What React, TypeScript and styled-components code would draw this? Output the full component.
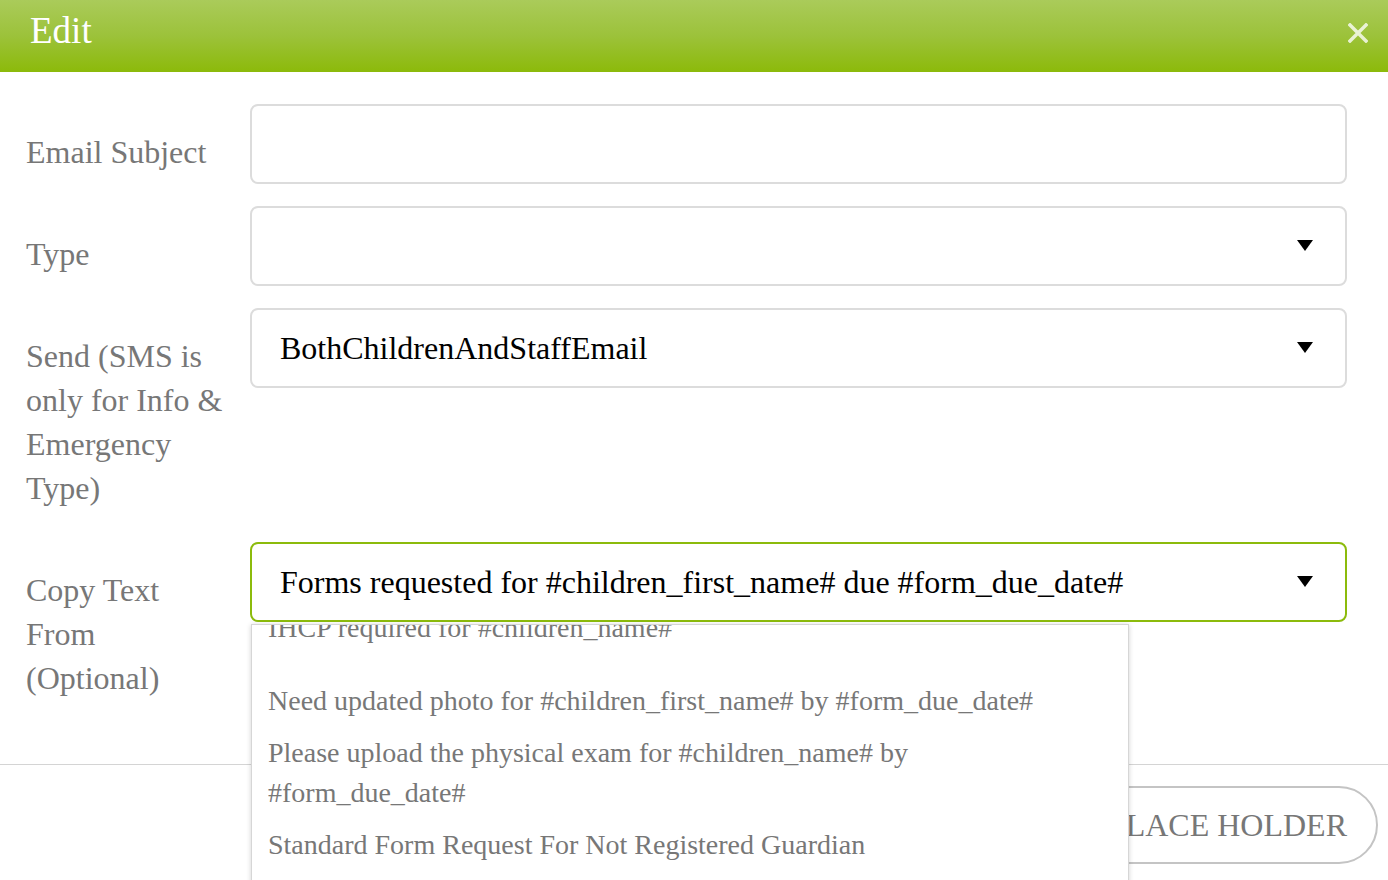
import React, { useLayoutEffect, useRef } from "react";
import styled, { createGlobalStyle } from "styled-components";

const GlobalStyle = createGlobalStyle`
  html, body { margin: 0; padding: 0; overflow: hidden; background: #fff; }
  body { font-family: "Liberation Serif", "Times New Roman", serif; }
  * { box-sizing: border-box; }
`;

const Modal = styled.div`
  width: 1388px;
  height: 880px;
  background: #fff;
  display: flex;
  flex-direction: column;
`;

const Header = styled.header`
  height: 72px;
  flex: none;
  display: flex;
  align-items: flex-start;
  justify-content: space-between;
  padding: 12px 20px 0 30px;
  background: linear-gradient(to bottom, #aacb5a 0%, #9cc23a 50%, #8cba0a 100%);
`;

const Title = styled.h1`
  margin: 0;
  font-size: 37px;
  line-height: 37px;
  font-weight: normal;
  color: #fff;
`;

const CloseButton = styled.button`
  margin-top: 11px;
  width: 20px;
  height: 20px;
  padding: 0;
  border: none;
  background: none;
  display: flex;
  cursor: pointer;
`;

const Body = styled.div`
  padding: 32px 41px 54px 26px;
  display: flex;
  flex-direction: column;
  gap: 22px;
  border-bottom: 1px solid #d4d4d4;
`;

const Row = styled.div`
  display: grid;
  grid-template-columns: 224px 1fr;
  align-items: start;
`;

const Label = styled.label`
  padding: 26px 20px 10px 0;
  font-size: 32px;
  line-height: 44px;
  color: #777;
`;

const FieldWrap = styled.div`
  position: relative;
`;

const TextInput = styled.input`
  width: 100%;
  height: 80px;
  border: 2px solid #dcdcdc;
  border-radius: 8px;
  padding: 0 28px;
  font-family: "Liberation Serif", "Times New Roman", serif;
  font-size: 32px;
  color: #000;
  outline: none;
  background: #fff;
`;

const SelectBox = styled.div<{ $focused?: boolean }>`
  height: 80px;
  border: 2px solid ${(p) => (p.$focused ? "#8cbb0c" : "#dcdcdc")};
  border-radius: 8px;
  padding: 0 32px 0 28px;
  display: flex;
  align-items: center;
  justify-content: space-between;
  font-size: 32px;
  color: #000;
  background: #fff;
`;

const SelectValue = styled.span`
  white-space: nowrap;
`;

const Arrow = styled.svg`
  flex: none;
  margin-top: -1px;
`;

const Dropdown = styled.div`
  position: absolute;
  top: calc(100% + 2px);
  left: 1px;
  width: 878px;
  height: 300px;
  background: #fff;
  border: 1px solid #d6d6d6;
  box-shadow: 0 1px 5px rgba(0, 0, 0, 0.18);
  overflow-y: auto;
  scrollbar-width: none;
  z-index: 10;
  &::-webkit-scrollbar { display: none; }
`;

const OptionList = styled.ul`
  list-style: none;
  margin: 0;
  padding: 0;
`;

const Option = styled.li<{ $extra?: number }>`
  padding: 6px 40px 6px 16px;
  margin-bottom: ${(p) => p.$extra ?? 0}px;
  font-size: 28px;
  line-height: 40px;
  color: #777;
`;

const Footer = styled.div`
  display: flex;
  justify-content: flex-end;
  padding: 21px 10px 0 0;
`;

const PillButton = styled.button`
  height: 78px;
  padding: 0 29px 0 29px;
  border: 2px solid #c4c4c4;
  border-radius: 39px;
  background: #fff;
  font-family: "Liberation Serif", "Times New Roman", serif;
  font-size: 32px;
  color: #777;
  cursor: pointer;
`;

const DownArrow = () => (
  <Arrow width="16" height="11" viewBox="0 0 16 11">
    <path d="M0 0 H16 L8 11 Z" fill="#000" />
  </Arrow>
);

const options: { text: string; extra?: number }[] = [
  { text: "Forms requested for #children_first_name# due #form_due_date#" },
  { text: "Immunization record needed for #children_name#" },
  { text: "IHCP required for #children_name#", extra: 21 },
  { text: "Need updated photo for #children_first_name# by #form_due_date#" },
  { text: "Please upload the physical exam for #children_name# by #form_due_date#" },
  { text: "Standard Form Request For Not Registered Guardian" },
  { text: "Vaccination form due #form_due_date#" },
];

export default function App() {
  const listRef = useRef<HTMLDivElement>(null);
  useLayoutEffect(() => {
    if (listRef.current) listRef.current.scrollTop = 127;
  }, []);

  return (
    <>
      <GlobalStyle />
      <Modal>
        <Header>
          <Title>Edit</Title>
          <CloseButton aria-label="Close">
            <svg width="20" height="20" viewBox="0 0 20 20">
              <path
                d="M2 2 L18 18 M18 2 L2 18"
                stroke="rgba(255,255,255,0.78)"
                strokeWidth="3.5"
                strokeLinecap="square"
              />
            </svg>
          </CloseButton>
        </Header>
        <Body>
          <Row>
            <Label>Email Subject</Label>
            <FieldWrap>
              <TextInput type="text" />
            </FieldWrap>
          </Row>
          <Row>
            <Label>Type</Label>
            <FieldWrap>
              <SelectBox>
                <SelectValue />
                <DownArrow />
              </SelectBox>
            </FieldWrap>
          </Row>
          <Row>
            <Label>Send (SMS is only for Info &amp; Emergency Type)</Label>
            <FieldWrap>
              <SelectBox>
                <SelectValue>BothChildrenAndStaffEmail</SelectValue>
                <DownArrow />
              </SelectBox>
            </FieldWrap>
          </Row>
          <Row>
            <Label>Copy Text From (Optional)</Label>
            <FieldWrap>
              <SelectBox $focused>
                <SelectValue>
                  Forms requested for #children_first_name# due #form_due_date#
                </SelectValue>
                <DownArrow />
              </SelectBox>
              <Dropdown ref={listRef}>
                <OptionList>
                  {options.map((o) => (
                    <Option key={o.text} $extra={o.extra}>
                      {o.text}
                    </Option>
                  ))}
                </OptionList>
              </Dropdown>
            </FieldWrap>
          </Row>
        </Body>
        <Footer>
          <PillButton>PLACE HOLDER</PillButton>
        </Footer>
      </Modal>
    </>
  );
}
